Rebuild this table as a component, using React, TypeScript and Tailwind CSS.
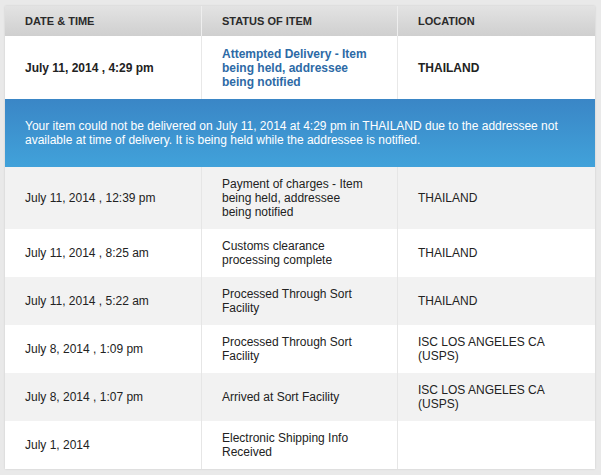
import React from "react";

type Row = { date: string; status: string[]; loc: string[]; bg: string };

const rows: Row[] = [
  { date: "July 11, 2014 , 12:39 pm", status: ["Payment of charges - Item", "being held, addressee", "being notified"], loc: ["THAILAND"], bg: "bg-[#f2f2f2]" },
  { date: "July 11, 2014 , 8:25 am", status: ["Customs clearance", "processing complete"], loc: ["THAILAND"], bg: "bg-white" },
  { date: "July 11, 2014 , 5:22 am", status: ["Processed Through Sort", "Facility"], loc: ["THAILAND"], bg: "bg-[#f2f2f2]" },
  { date: "July 8, 2014 , 1:09 pm", status: ["Processed Through Sort", "Facility"], loc: ["ISC LOS ANGELES CA", "(USPS)"], bg: "bg-white" },
  { date: "July 8, 2014 , 1:07 pm", status: ["Arrived at Sort Facility"], loc: ["ISC LOS ANGELES CA", "(USPS)"], bg: "bg-[#f2f2f2]" },
  { date: "July 1, 2014", status: ["Electronic Shipping Info", "Received"], loc: [], bg: "bg-white" },
];

const Lines = ({ lines }: { lines: string[] }) => (
  <div>
    {lines.map((l, i) => (
      <div key={i}>{l}</div>
    ))}
  </div>
);

export default function App() {
  return (
    <div
      className="w-[601px] h-[475px] bg-[#e9e9e9] pt-[6px] pl-[5px] text-[12px] leading-[14px] text-[#222]"
      style={{ fontFamily: '"Liberation Sans", Arial, sans-serif' }}
    >
      <div className="w-[590px] shadow-[0_0_2px_rgba(0,0,0,0.12)]">
        {/* header */}
        <div className="grid grid-cols-[196px_196px_198px] h-[30px] bg-gradient-to-b from-[#e3e3e3] to-[#cfcfcf] text-[11px] font-bold text-[#2a2a2a]">
          <div className="flex items-center pl-[20px]">DATE &amp; TIME</div>
          <div className="flex items-center pl-[20px] border-l border-[#eeeeee]">STATUS OF ITEM</div>
          <div className="flex items-center pl-[20px] border-l border-[#eeeeee]">LOCATION</div>
        </div>
        {/* first row */}
        <div className="grid grid-cols-[196px_196px_198px] h-[63px] bg-white font-bold">
          <div className="flex items-center pl-[20px]">July 11, 2014 , 4:29 pm</div>
          <div className="flex items-center pl-[20px] border-l border-[#e8e8e8] text-[#2d6aa6]">
            <Lines lines={["Attempted Delivery - Item", "being held, addressee", "being notified"]} />
          </div>
          <div className="flex items-center pl-[20px] border-l border-[#e8e8e8]">THAILAND</div>
        </div>
        {/* banner */}
        <div className="h-[68px] flex items-center pl-[20px] bg-gradient-to-b from-[#3a86c6] to-[#41a2da] text-white">
          <div>
            <div>Your item could not be delivered on July 11, 2014 at 4:29 pm in THAILAND due to the addressee not</div>
            <div>available at time of delivery. It is being held while the addressee is notified.</div>
          </div>
        </div>
        {rows.map((r, i) => (
          <div
            key={i}
            className={`grid grid-cols-[196px_196px_198px] ${r.status.length === 3 ? "h-[62px]" : "h-[48px]"} ${r.bg}`}
          >
            <div className="flex items-center pl-[20px]">{r.date}</div>
            <div className="flex items-center pl-[20px] border-l border-[#e6e6e6]">
              <Lines lines={r.status} />
            </div>
            <div className="flex items-center pl-[20px] border-l border-[#e6e6e6]">
              <Lines lines={r.loc} />
            </div>
          </div>
        ))}
      </div>
    </div>
  );
}
